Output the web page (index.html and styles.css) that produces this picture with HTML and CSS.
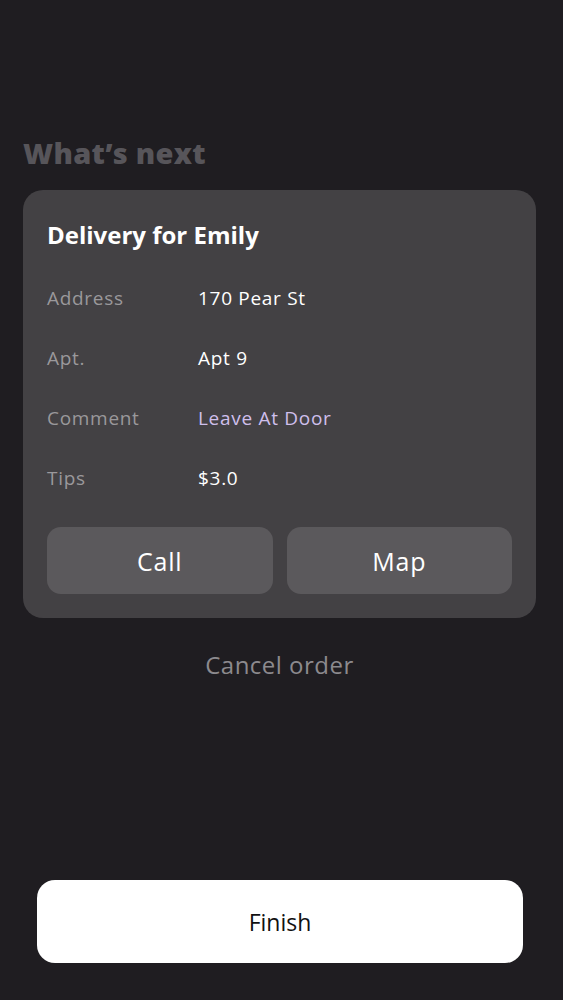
FILE: index.html
```html
<!DOCTYPE html>
<html lang="en">
<head>
  <meta charset="UTF-8" />
  <meta name="viewport" content="width=device-width, initial-scale=1.0"/>
  <title>What's next</title>
  <link rel="stylesheet" href="styles.css">
</head>
<body>
  <main class="screen">
    <h1 class="title">What’s next</h1>

    <section class="card">
      <h2 class="card-title">Delivery for Emily</h2>
      <dl class="details">
        <div class="row">
          <dt>Address</dt>
          <dd>170 Pear St</dd>
        </div>
        <div class="row">
          <dt>Apt.</dt>
          <dd>Apt 9</dd>
        </div>
        <div class="row">
          <dt>Comment</dt>
          <dd class="accent">Leave At Door</dd>
        </div>
        <div class="row">
          <dt>Tips</dt>
          <dd>$3.0</dd>
        </div>
      </dl>
      <div class="actions">
        <button class="action">Call</button>
        <button class="action">Map</button>
      </div>
    </section>

    <button class="cancel">Cancel order</button>

    <button class="finish">Finish</button>
  </main>
</body>
</html>
```

FILE: styles.css
```css
:root {
  --bg: #1f1d21;
  --card: #434144;
  --btn: #5b595c;
  --muted: #9a989b;
  --accent: #cfbfec;
}

* {
  margin: 0;
  padding: 0;
  box-sizing: border-box;
}

body {
  font-family: 'Open Sans', 'Noto Sans', sans-serif;
  background: var(--bg);
  color: #fff;
  height: 100vh;
}

.screen {
  height: 100%;
  display: flex;
  flex-direction: column;
  padding: 133px 27px 37px 23px;
}

.title {
  font-size: 29px;
  font-weight: 800;
  letter-spacing: 0.3px;
  color: #57555a;
  line-height: 40px;
  margin-bottom: 17px;
}

.card {
  background: var(--card);
  border-radius: 20px;
  padding: 28px 24px 24px;
}

.card-title {
  font-size: 24px;
  font-weight: 700;
  line-height: 34px;
  margin-bottom: 30px;
}

.details {
  display: flex;
  flex-direction: column;
  gap: 28px;
  margin-bottom: 33px;
}

.row {
  display: flex;
  font-size: 19px;
  letter-spacing: 0.7px;
  line-height: 32px;
}

.row dt {
  width: 151px;
  color: var(--muted);
}

.row dd {
  color: #fff;
}

.row dd.accent {
  color: var(--accent);
}

.actions {
  display: flex;
  gap: 14px;
}

.action {
  flex: 1;
  height: 67px;
  border: none;
  border-radius: 14px;
  background: var(--btn);
  color: #fff;
  font-family: inherit;
  font-size: 25px;
  font-weight: 500;
  letter-spacing: 0.8px;
}

.cancel {
  align-self: center;
  margin-top: 32px;
  border: none;
  background: none;
  color: #8c8a8e;
  font-family: inherit;
  font-size: 24px;
  letter-spacing: 0.5px;
  line-height: 30px;
}

.finish {
  margin-top: auto;
  margin-left: 14px;
  margin-right: 13px;
  height: 83px;
  border: none;
  border-radius: 18px;
  background: #fff;
  color: #111;
  font-family: inherit;
  font-size: 23px;
  font-weight: 500;
}
```
